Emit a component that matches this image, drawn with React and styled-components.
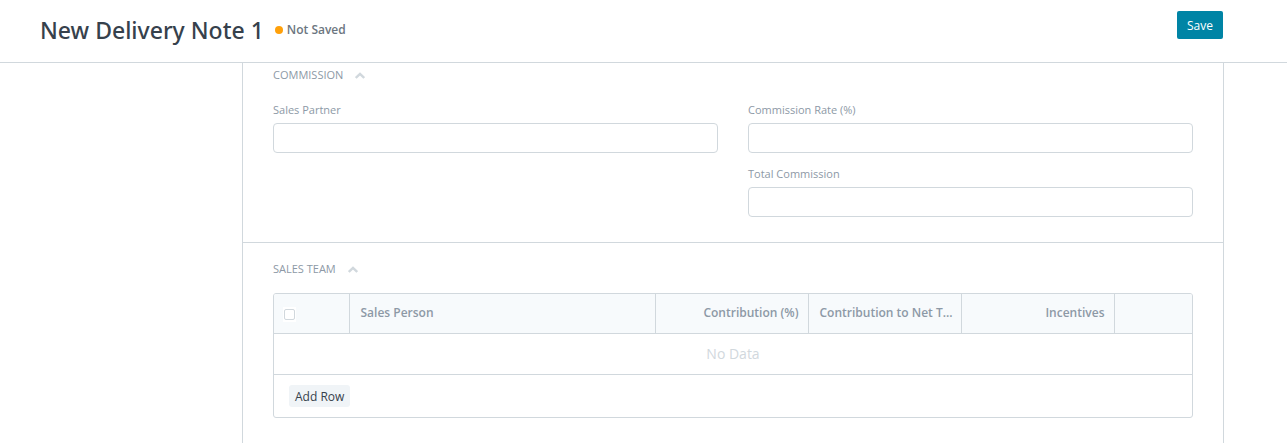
import React from "react";
import styled, { createGlobalStyle } from "styled-components";

const line = "#d1d8dd";
const muted = "#8d99a6";
const ink = "#36414c";

const GlobalStyle = createGlobalStyle`
  *, *::before, *::after { box-sizing: border-box; }
  body {
    margin: 0;
    background: #fff;
    color: ${ink};
    font-family: "Segoe UI", "Open Sans", "Noto Sans", sans-serif;
    font-size: 12px;
    line-height: 18px;
  }
  button, input { font: inherit; color: inherit; }
`;

const Header = styled.header`
  display: flex;
  align-items: flex-start;
  justify-content: space-between;
  padding: 11px 64px 11px 40px;
  border-bottom: 1px solid ${line};
`;

const TitleArea = styled.div`
  display: flex;
  align-items: center;
  gap: 11px;
  height: 38px;
  margin-bottom: 2px;
`;

const Title = styled.h1`
  margin: 0;
  font-family: "Segoe UI", "Noto Sans", "Open Sans", sans-serif;
  font-size: 23px;
  font-weight: 500;
  line-height: 38px;
`;

const Status = styled.span`
  display: flex;
  align-items: center;
  gap: 4px;
  color: #6c7680;
  font-weight: 600;

  &::before {
    content: "";
    width: 8px;
    height: 8px;
    border-radius: 50%;
    background: #ffa00a;
  }
`;

const SaveButton = styled.button`
  padding: 6px 10px 4px;
  border: 0;
  border-radius: 2px;
  background: #0084a5;
  color: #fff;
`;

const Page = styled.div`
  display: flex;
  padding: 0 63px 0 40px;
`;

const Sidebar = styled.aside`
  flex: 0 0 202px;
`;

const Form = styled.main`
  flex: 1;
  min-width: 0;
  border: solid ${line};
  border-width: 0 1px;
`;

const Section = styled.section`
  padding: ${(p) => (p.$first ? "3px 30px 25px" : "17px 30px 25px")};
  border-top: ${(p) => (p.$first ? "0" : `1px solid ${line}`)};
`;

const SectionTitle = styled.h2`
  display: flex;
  align-items: center;
  gap: 12px;
  margin: 0 0 ${(p) => p.$gap}px;
  color: ${muted};
  font-size: 11px;
  font-weight: 400;
  line-height: 18px;
  text-transform: uppercase;
`;

const Fields = styled.div`
  display: grid;
  grid-template-columns: 1fr 1fr;
  gap: 30px;
`;

const FieldColumn = styled.div`
  display: flex;
  flex-direction: column;
  gap: 12px;
`;

const FieldBox = styled.div`
  display: flex;
  flex-direction: column;
  gap: 4px;
`;

const FieldLabel = styled.label`
  color: ${muted};
  font-size: 11px;
`;

const TextInput = styled.input`
  width: 100%;
  height: 30px;
  padding: 6px 10px;
  border: 1px solid ${line};
  border-radius: 4px;
  background: #fff;
`;

const Grid = styled.div`
  border: 1px solid ${line};
  border-radius: 3px;
  overflow: hidden;
`;

const Table = styled.table`
  width: 100%;
  table-layout: fixed;
  border-collapse: separate;
  border-spacing: 0;
`;

const HeadCell = styled.th`
  width: ${(p) => p.$share};
  height: 40px;
  padding: ${(p) => (p.$check ? "2px 9px 0" : "0 10px 2px")};
  border-bottom: 1px solid ${line};
  border-right: 1px solid ${line};
  background: #f7fafc;
  color: ${muted};
  font-weight: 600;
  text-align: ${(p) => (p.$right ? "right" : "left")};
  white-space: nowrap;

  &:last-child { border-right: 0; }
`;

const EmptyCell = styled.td`
  height: 41px;
  padding: 0;
  border-bottom: 1px solid ${line};
  color: ${line};
  font-size: 14px;
  text-align: center;
`;

const CheckLabel = styled.label`
  display: block;
  width: 13px;
  padding: 2px 1px;
  background: #fff;
`;

const CheckBox = styled.input`
  display: block;
  appearance: none;
  width: 11px;
  height: 11px;
  margin: 0;
  border: 1px solid ${line};
  border-radius: 2px;
  background: #fff;
`;

const GridFooter = styled.div`
  padding: 10px 15px;
`;

const AddRowButton = styled.button`
  display: block;
  padding: 3px 6px 1px;
  border: 0;
  border-radius: 3px;
  background: #f0f4f7;
`;

const Chevron = () => (
  <svg width="10" height="7" viewBox="0 0 10 7" fill="none" stroke={line} strokeWidth="2.4" aria-hidden="true">
    <path d="M0.8 6L5 1.9L9.2 6" />
  </svg>
);

const Field = ({ id, label }) => (
  <FieldBox>
    <FieldLabel htmlFor={id}>{label}</FieldLabel>
    <TextInput id={id} type="text" />
  </FieldBox>
);

export default function App() {
  return (
    <>
      <GlobalStyle />
      <Header>
        <TitleArea>
          <Title>New Delivery Note 1</Title>
          <Status>Not Saved</Status>
        </TitleArea>
        <SaveButton type="button">Save</SaveButton>
      </Header>
      <Page>
        <Sidebar />
        <Form>
          <Section $first>
            <SectionTitle $gap={17}>Commission <Chevron /></SectionTitle>
            <Fields>
              <FieldColumn>
                <Field id="sales-partner" label="Sales Partner" />
              </FieldColumn>
              <FieldColumn>
                <Field id="commission-rate" label="Commission Rate (%)" />
                <Field id="total-commission" label="Total Commission" />
              </FieldColumn>
            </Fields>
          </Section>
          <Section>
            <SectionTitle $gap={15}>Sales Team <Chevron /></SectionTitle>
            <Grid>
              <Table>
                <thead>
                  <tr>
                    <HeadCell $share="8.3333%" $check>
                      <CheckLabel>
                        <CheckBox type="checkbox" aria-label="Select all rows" />
                      </CheckLabel>
                    </HeadCell>
                    <HeadCell $share="33.3333%">Sales Person</HeadCell>
                    <HeadCell $share="16.6667%" $right>Contribution (%)</HeadCell>
                    <HeadCell $share="16.6667%" $right>Contribution to Net T...</HeadCell>
                    <HeadCell $share="16.6667%" $right>Incentives</HeadCell>
                    <HeadCell $share="8.3333%" />
                  </tr>
                </thead>
                <tbody>
                  <tr>
                    <EmptyCell colSpan={6}>No Data</EmptyCell>
                  </tr>
                </tbody>
              </Table>
              <GridFooter>
                <AddRowButton type="button">Add Row</AddRowButton>
              </GridFooter>
            </Grid>
          </Section>
        </Form>
      </Page>
    </>
  );
}
